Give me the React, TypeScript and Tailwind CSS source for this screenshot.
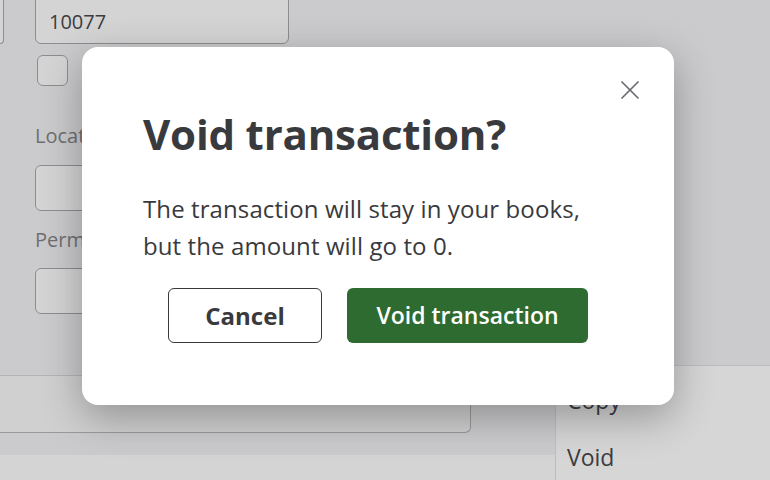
import { X } from 'lucide-react'

export default function App() {
  return (
    <div className="relative w-[770px] h-[480px] overflow-hidden bg-[#cbcbcd] font-['Open_Sans',sans-serif]">
      {/* dimmed page behind the dialog */}
      <div className="flex flex-col">
        <div className="flex -mt-[6px] h-[50px]">
          <div className="w-[4px] h-full border-r border-b border-[#8d8d8f] rounded-br-md bg-[#d4d4d5]" />
          <div className="ml-[31px] w-[254px] h-full border border-[#8d8d8f] rounded-md bg-[#d4d4d5] flex items-center pl-[13px] pt-[6px] text-[20px] text-[#3c3c3e]">
            10077
          </div>
        </div>
        <div className="ml-[37px] mt-[11px] w-[31px] h-[31px] border border-[#8d8d8f] rounded-md bg-[#d4d4d5]" />
        <div className="ml-[35px] mt-[37px] text-[20px] leading-[26px] text-[#6f6f71]">Location</div>
        <div className="ml-[35px] mt-[16px] w-[254px] h-[46px] border border-[#8d8d8f] rounded-md bg-[#d4d4d5]" />
        <div className="ml-[35px] mt-[16px] text-[20px] leading-[26px] text-[#6f6f71]">Permit no.</div>
        <div className="ml-[35px] mt-[15px] w-[254px] h-[46px] border border-[#8d8d8f] rounded-md bg-[#d4d4d5]" />
        <div className="mt-[61px] w-[555px] border-t border-[#b4b4b6]">
          <div className="w-[471px] h-[57px] border-r border-b border-[#9a9a9c] rounded-br-md bg-[#d0d0d1]" />
        </div>
        <div className="mt-[22px] w-[555px] h-[30px] bg-[#d4d4d5]" />
      </div>

      {/* menu */}
      <div className="absolute left-[555px] top-[365px] w-[215px] h-[115px] bg-[#d6d6d6] border-l border-t border-[#bdbdbf] text-[23px] text-[#3c3c3e]">
        <div className="pl-[11px] pt-[18px] leading-[32px]">Copy</div>
        <div className="pl-[11px] pt-[25px] leading-[32px]">Void</div>
      </div>

      {/* dialog */}
      <div className="absolute left-[82px] top-[47px] w-[592px] h-[358px] bg-white rounded-2xl shadow-[0_12px_40px_rgba(0,0,0,0.3)] px-[61px] pt-[61px]">
        <button className="absolute right-[28px] top-[27px] w-[32px] h-[32px] flex items-center justify-center text-[#6b6c72]">
          <X size={34} strokeWidth={1.3} />
        </button>
        <h2 className="text-[42px] leading-[52px] font-bold text-[#393a3d] tracking-[-0.2px]">Void transaction?</h2>
        <p className="mt-[30px] text-[24px] leading-[37px] text-[#393a3d] tracking-[0.1px]">
          The transaction will stay in your books,
          <br />
          but the amount will go to 0.
        </p>
        <div className="mt-[24px] flex justify-center gap-[25px]">
          <button className="w-[154px] h-[55px] rounded-md border border-[#393a3d] text-[24px] font-bold text-[#393a3d]">
            Cancel
          </button>
          <button className="w-[241px] h-[55px] rounded-md bg-[#2e6b30] text-[23px] font-semibold text-white">
            Void transaction
          </button>
        </div>
      </div>
    </div>
  )
}
